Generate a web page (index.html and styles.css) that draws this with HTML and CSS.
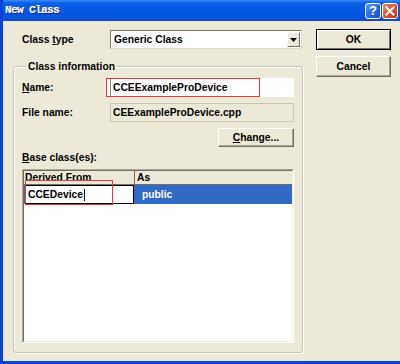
FILE: index.html
```html
<!DOCTYPE html>
<html lang="en">
<head>
<meta charset="UTF-8" />
<title>New Class</title>
<link rel="stylesheet" href="styles.css">
</head>
<body>
<div class="window">
  <div class="titlebar">
    <span class="title">New Class</span>
    <div class="caption-buttons">
      <span class="cap-btn help">?</span>
      <span class="cap-btn close">
        <svg width="10" height="10" viewBox="0 0 10 10"><path d="M1.5 1.5 L8.5 8.5 M8.5 1.5 L1.5 8.5" stroke="#fff" stroke-width="2" stroke-linecap="square"/></svg>
      </span>
    </div>
  </div>

  <div class="dialog">
    <div class="main">
      <!-- class type -->
      <div class="type-row">
        <label class="lbl type-lbl">Class <u>t</u>ype</label>
        <div class="combo">
          <span>Generic Class</span>
          <span class="drop"><svg width="7" height="4" viewBox="0 0 7 4"><path d="M0 0 H7 L3.5 4 Z" fill="#000"/></svg></span>
        </div>
      </div>

      <!-- class information -->
      <fieldset class="group">
        <legend>Class information</legend>
        <div class="field-row">
          <label class="lbl field-lbl"><u>N</u>ame:</label>
          <div class="edit name-edit">CCEExampleProDevice<span class="mark name-mark"></span></div>
        </div>
        <div class="field-row file-row">
          <label class="lbl field-lbl">File name:</label>
          <div class="readonly">CEExampleProDevice.cpp</div>
        </div>
        <div class="field-row change-row">
          <button class="btn change-btn"><u>C</u>hange...</button>
        </div>
        <div class="base-lbl"><u>B</u>ase class(es):</div>
        <div class="list-frame">
          <div class="list">
            <div class="list-head">
              <span class="col col-from">Derived From</span>
              <span class="col col-as">As</span>
            </div>
            <div class="list-row selected">
              <span class="cell-edit">CCEDevice<span class="caret"></span></span>
              <span class="cell-as">public</span>
            </div>
          </div>
          <span class="mark derived-mark"></span>
        </div>
      </fieldset>
    </div>

    <div class="side">
      <button class="btn default">OK</button>
      <button class="btn">Cancel</button>
    </div>
  </div>
</div>
</body>
</html>
```

FILE: styles.css
```css
* {
    box-sizing: border-box;
}
body {
    margin: 0;
    width: 400px;
    height: 364px;
    overflow: hidden;
    font-family: "Liberation Sans", Arial, sans-serif;
    font-size: 10.3px;
    font-weight: bold;
    color: #000;
    background-color: #ECE9D8;
}
u {
    text-decoration: underline;
    text-underline-offset: 1px;
}
.window {
    height: 364px;
    border-left: 3px solid #0843D6;
    border-bottom: 3px solid #0843D6;
    display: flex;
    flex-direction: column;
}
/* title bar */
.titlebar {
    height: 21px;
    flex-shrink: 0;
    display: flex;
    align-items: center;
    justify-content: space-between;
    padding: 0 2px 0 2px;
    background: linear-gradient(#3A8CF6 0, #0A5FE8 3px, #0656E2 14px, #0A52D8 19px, #0B48C6 21px);
}
.title {
    font-family: "Liberation Mono", "Courier New", monospace;
    font-size: 11px;
    font-weight: bold;
    letter-spacing: -0.6px;
    color: #fff;
    text-shadow: 1px 1px 0 #0B1E7A, 0.5px 0 0 #fff;
    margin-top: -1px;
}
.caption-buttons {
    display: flex;
    gap: 1px;
}
.cap-btn {
    width: 16px;
    height: 16px;
    border: 1px solid #fff;
    border-radius: 3px;
    display: flex;
    align-items: center;
    justify-content: center;
    color: #fff;
    font-size: 13px;
    font-weight: bold;
}
.cap-btn.help {
    background: linear-gradient(135deg, #5B9BFA, #2463DE 60%, #1D4FC6);
}
.cap-btn.close {
    background: linear-gradient(135deg, #F0876A, #DA4F2C 55%, #C0361A);
}
/* dialog body */
.dialog {
    flex: 1;
    display: flex;
    gap: 13px;
    padding: 8px 0 0 10px;
}
.main {
    width: 290px;
    display: flex;
    flex-direction: column;
}
.side {
    width: 75px;
    display: flex;
    flex-direction: column;
    gap: 6px;
}
.type-row {
    display: flex;
    align-items: center;
    height: 19px;
    margin-top: 1px;
    padding-left: 9px;
}
.type-lbl {
    width: 88px;
}
.combo {
    width: 192px;
    height: 19px;
    background-color: #fff;
    border: 1px solid;
    border-color: #7A786C #E0DED3 #E0DED3 #7A786C;
    display: flex;
    align-items: center;
    padding-left: 3px;
}
.drop {
    margin-left: auto;
    margin-right: 1px;
    width: 13px;
    height: 15px;
    background-color: #ECE9D8;
    border: 1px solid;
    border-color: #fff #716F64 #716F64 #fff;
    display: flex;
    align-items: center;
    justify-content: center;
}
/* group box */
.group {
    margin: 12px 0 0;
    padding: 6px 8px 9px 8px;
    border: 1px solid #C8C5B4;
    border-radius: 3px;
    box-shadow: inset 1px 1px 0 #fff, 1px 1px 0 #fff;
}
.group legend {
    padding: 0 2px;
    margin-left: 4px;
}
.field-row {
    display: flex;
    align-items: center;
    height: 19px;
}
.file-row, .change-row {
    margin-top: 6px;
}
.field-lbl {
    width: 84px;
}
.edit {
    position: relative;
    width: 188px;
    height: 19px;
    background-color: #fff;
    padding-left: 7px;
    line-height: 19px;
    box-shadow: inset 4px 0 0 #fff, inset 5px 0 0 #8C8A7E;
}
.readonly {
    margin-left: 4px;
    width: 184px;
    height: 19px;
    line-height: 17px;
    padding-left: 2px;
    border: 1px solid #C9C6B6;
    background-color: #ECE9D8;
}
.mark {
    position: absolute;
    border: 1px solid #E8383B;
}
.name-mark {
    left: 0;
    top: 0;
    width: 154px;
    height: 19px;
}
.btn {
    font: inherit;
    color: #000;
    height: 19px;
    padding: 0;
    background-color: #ECE9D8;
    border: 1px solid;
    border-color: #fff #716F64 #716F64 #fff;
    box-shadow: inset -1px -1px 0 #ACA899;
}
.side .btn {
    height: 21px;
}
.btn.default {
    border: 1px solid #000;
    box-shadow: inset 1px 1px 0 #fff, inset -1px -1px 0 #716F64;
}
.change-btn {
    margin-left: auto;
    width: 76px;
}
.base-lbl {
    margin-top: 4px;
    height: 14px;
    line-height: 14px;
}
/* list */
.list-frame {
    position: relative;
    margin-top: 4px;
    width: 272px;
    height: 174px;
    border: 1px solid;
    border-color: #ACA899 #fff #fff #ACA899;
}
.list {
    height: 100%;
    background-color: #fff;
    border: 1px solid;
    border-color: #716F64 #F1EFE2 #F1EFE2 #716F64;
}
.list-head {
    display: flex;
    height: 14px;
    background-color: #ECE9D8;
    border-bottom: 1px solid #716F64;
}
.col {
    line-height: 13px;
    padding-left: 1px;
}
.col-from {
    width: 111px;
    border-right: 1px solid #716F64;
}
.col-as {
    padding-left: 2px;
}
.list-row {
    display: flex;
    align-items: center;
    height: 19px;
}
.list-row.selected {
    background-color: #316AC5;
    color: #fff;
}
.cell-edit {
    margin-left: 1px;
    width: 109px;
    height: 19px;
    line-height: 17px;
    padding-left: 2px;
    background-color: #fff;
    color: #000;
    border: 1px solid #000;
    display: flex;
    align-items: center;
}
.caret {
    width: 1px;
    height: 12px;
    background-color: #000;
    margin-left: 1px;
}
.cell-as {
    padding-left: 8px;
}
.derived-mark {
    left: 2px;
    top: 10px;
    width: 88px;
    height: 25px;
}
```
